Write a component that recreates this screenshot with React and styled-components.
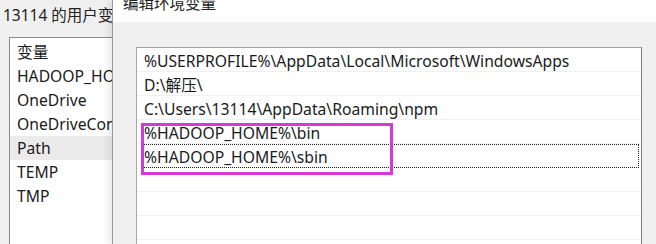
import React from 'react';
import styled, { createGlobalStyle } from 'styled-components';

const GlobalStyle = createGlobalStyle`
    html, body {
        margin: 0;
        padding: 0;
        background: #f0f0f0;
        overflow: hidden;
    }
    body {
        font-family: 'Noto Sans', 'Noto Sans CJK SC', sans-serif;
        color: #1a1a1a;
    }
`;

const Screen = styled.div`
    width: 656px;
    height: 244px;
    display: flex;
    overflow: hidden;
    background: #f0f0f0;
`;

const BackWindow = styled.div`
    width: 112px;
    flex-shrink: 0;
    display: flex;
    flex-direction: column;
    overflow: hidden;
`;

const BackTitle = styled.div`
    height: 37px;
    padding: 3px 0 0 3px;
    box-sizing: border-box;
    font-size: 15.5px;
    white-space: nowrap;
    color: #222;
`;

const BackList = styled.div`
    margin-left: 9px;
    flex: 1;
    background: #fff;
    border-left: 1px solid #8a8a8a;
    border-top: 1px solid #8a8a8a;
    padding-top: 2px;
`;

const BackRow = styled.div`
    height: 24px;
    line-height: 25px;
    padding-left: 7px;
    font-size: 15.7px;
    white-space: nowrap;
    overflow: hidden;
    background: ${(p) => (p.$active ? '#ebebeb' : 'transparent')};
`;

const Dialog = styled.div`
    flex: 1;
    display: flex;
    flex-direction: column;
    border-left: 1px solid #9a9a9a;
    box-shadow: -4px 0 6px rgba(0, 0, 0, 0.08);
    background: #f0f0f0;
`;

const TitleBar = styled.div`
    height: 22px;
    background: #fff;
    padding-left: 10px;
    overflow: hidden;
`;

const TitleText = styled.div`
    margin-top: -9px;
    font-size: 15.5px;
    line-height: 24px;
    color: #222;
`;

const Body = styled.div`
    flex: 1;
    padding: 25px 14px 0 23px;
    display: flex;
`;

const PathList = styled.div`
    flex: 1;
    background: #fff;
    border-left: 1px solid #a8a8a8;
    border-top: 1px solid #a0a0a0;
    border-right: 1px solid #7c7c7c;
    position: relative;
`;

const PathRow = styled.div`
    height: 24px;
    box-sizing: border-box;
    padding-top: 2px;
    line-height: 22px;
    font-size: 15.7px;
    white-space: nowrap;
    border-bottom: 1px solid #f0f0f0;
    outline: ${(p) => (p.$focused ? '1px dotted #222' : 'none')};
    outline-offset: -1px;
    margin-right: ${(p) => (p.$focused ? '2px' : '0')};
    margin-left: ${(p) => (p.$focused ? '5px' : '0')};
    padding-left: ${(p) => (p.$focused ? '2px' : '7px')};
`;

const Highlight = styled.div`
    position: absolute;
    left: 4px;
    top: 75px;
    width: 252px;
    height: 52px;
    box-sizing: border-box;
    border: 3px solid #d63ad6;
    pointer-events: none;
`;

const backItems = ['变量', 'HADOOP_HOME', 'OneDrive', 'OneDriveConsumer', 'Path', 'TEMP', 'TMP'];

const paths = [
    '%USERPROFILE%\\AppData\\Local\\Microsoft\\WindowsApps',
    'D:\\解压\\',
    'C:\\Users\\13114\\AppData\\Roaming\\npm',
    '%HADOOP_HOME%\\bin',
    '%HADOOP_HOME%\\sbin',
    '',
    '',
    '',
];

const App = () => {
    return (
        <>
            <GlobalStyle />
            <Screen>
                <BackWindow>
                    <BackTitle>13114 的用户变量</BackTitle>
                    <BackList>
                        {backItems.map((item) => (
                            <BackRow key={item} $active={item === 'Path'}>
                                {item}
                            </BackRow>
                        ))}
                    </BackList>
                </BackWindow>
                <Dialog>
                    <TitleBar>
                        <TitleText>编辑环境变量</TitleText>
                    </TitleBar>
                    <Body>
                        <PathList>
                            {paths.map((p, i) => (
                                <PathRow key={i} $focused={i === 4}>
                                    {p}
                                </PathRow>
                            ))}
                            <Highlight />
                        </PathList>
                    </Body>
                </Dialog>
            </Screen>
        </>
    );
};

export default App;
